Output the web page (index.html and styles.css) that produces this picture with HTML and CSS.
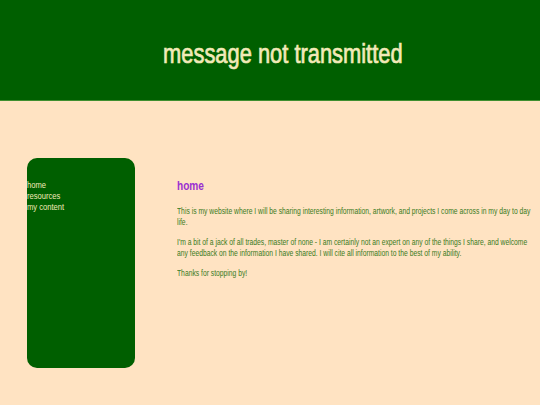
FILE: index.html
```html
<!DOCTYPE html>
<html>
<head>
<meta charset="utf-8">
<link rel="stylesheet" href="styles.css">
</head>
<body>
<header class="site-header">
  <h1 class="site-title">message not transmitted</h1>
</header>
<div class="layout">
  <nav class="sidebar">
    <a class="nav-link" href="#">home</a>
    <a class="nav-link" href="#">resources</a>
    <a class="nav-link" href="#">my content</a>
  </nav>
  <main class="content">
    <h2 class="page-title">home</h2>
    <p class="para">This is my website where I will be sharing interesting information, artwork, and projects I come across in my day to day life.</p>
    <p class="para">I'm a bit of a jack of all trades, master of none - I am certainly not an expert on any of the things I share, and welcome any feedback on the information I have shared. I will cite all information to the best of my ability.</p>
    <p class="para">Thanks for stopping by!</p>
  </main>
</div>
</body>
</html>
```
FILE: styles.css
```css
html, body {
  margin: 0;
  padding: 0;
}
body {
  background: #ffe3c2;
  font-family: "Liberation Sans", Arial, sans-serif;
  width: 540px;
  height: 405px;
  overflow: hidden;
}
.site-header {
  background: #005f00;
  height: 100px;
  border-bottom: 1px solid #3f8f2f;
  display: flex;
  align-items: center;
  justify-content: center;
  padding-left: 26px;
}
.site-title {
  margin: 0;
  color: #f2eab8;
  font-size: 27px;
  font-weight: normal;
  -webkit-text-stroke: 0.7px #f2eab8;
  padding-top: 9px;
  transform: scaleX(0.81);
  transform-origin: center;
  white-space: nowrap;
}
.layout {
  display: flex;
  padding-left: 27px;
  padding-top: 57px;
}
.sidebar {
  flex-shrink: 0;
  width: 108px;
  height: 210px;
  background: #005f00;
  border-radius: 10px;
  display: flex;
  flex-direction: column;
  align-items: flex-start;
  padding-top: 21px;
  box-sizing: border-box;
}
.nav-link {
  color: #f2eab8;
  text-decoration: none;
  font-size: 9.5px;
  line-height: 11px;
  transform: scaleX(0.8);
  transform-origin: left center;
  white-space: nowrap;
}
.content {
  flex-shrink: 0;
  margin-left: 42px;
  width: 478px;
  padding-top: 20px;
  transform: scaleX(0.75);
  transform-origin: left top;
}
.page-title {
  margin: 0 0 12px 0;
  color: #9a30d0;
  font-size: 13.5px;
  font-weight: bold;
  line-height: 16px;
}
.para {
  margin: 0 0 10px 0;
  color: #3a7a1c;
  font-size: 9px;
  line-height: 10.5px;
}
```
